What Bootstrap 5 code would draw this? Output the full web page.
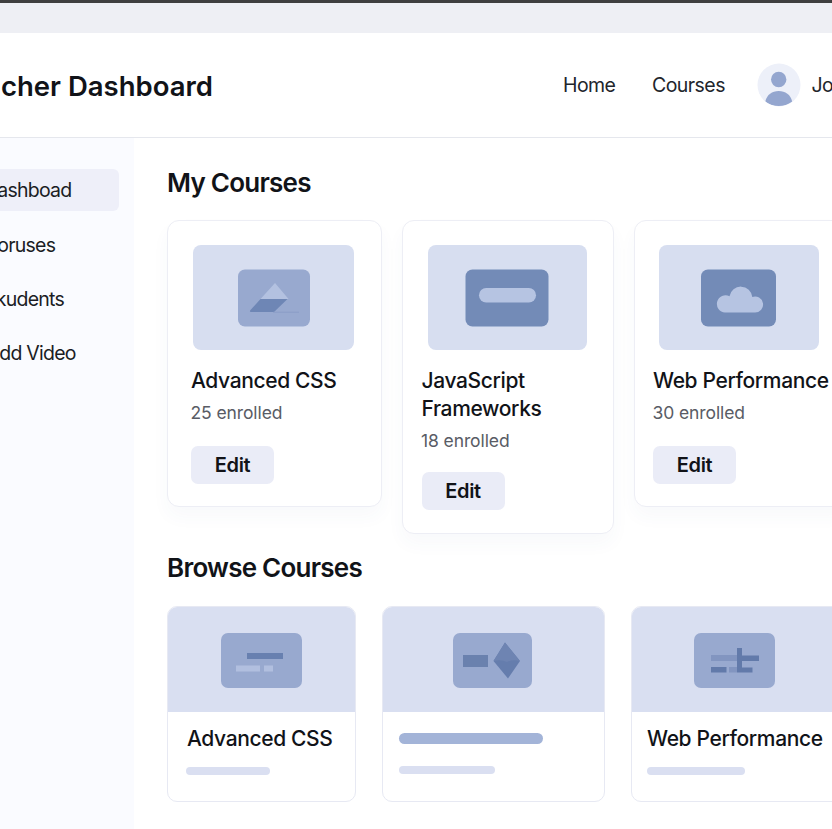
<!DOCTYPE html>
<html lang="en">
<head>
<meta charset="utf-8">
<meta name="viewport" content="width=device-width, initial-scale=1">
<title>Teacher Dashboard</title>
<link href="https://cdn.jsdelivr.net/npm/bootstrap@5.3.0/dist/css/bootstrap.min.css" rel="stylesheet">
<style>
body{font-family:Inter,"Liberation Sans",sans-serif;color:#111318;background:#fff;height:829px;overflow:hidden;font-size:20px}
.topline{height:3px;background:#3f3f3f}
.topband{height:30px;background:#eeeff4}
.app-header{height:105px;border-bottom:1px solid #e5e7ed}
.app-title{flex:0 0 563px;font-size:27.5px;font-weight:600;letter-spacing:0;line-height:34px;padding-left:1px;padding-top:1px;white-space:nowrap}
.top-link{font-size:19.5px;line-height:28px;letter-spacing:-.55px;color:#22252b;white-space:nowrap}
.link-home{flex:0 0 89px}
.link-courses{flex:0 0 104.5px}
.avatar{margin-right:11px}
.side{width:134px;height:691px;background:#fafbff;padding-top:31px}
.side-item{height:42px;line-height:42px;font-size:19.5px;letter-spacing:-.75px;color:#1b1d24;white-space:nowrap;margin-bottom:12px;overflow:hidden}
.side-item.current{width:119px;background:#eeeff9;border-radius:0 6px 6px 0;margin-bottom:13px}
.side-item span{display:inline-block;margin-left:-2.8px}
.side-item .cut-more{margin-left:-4.3px}
.side-item .cut-less{margin-left:-.8px}
.main-area{width:698px;padding:29px 0 0 33px}
.sec-title{font-size:26px;font-weight:600;line-height:32px;letter-spacing:-.75px;margin:0;white-space:nowrap}
.sec-browse{margin-top:17px}
.row-one{margin-top:20.500px;height:315.500px}
.row-two{margin-top:22px}
.course{border:1.5px solid #edeef5;border-radius:12px;box-shadow:0 10px 18px rgba(70,80,150,.035);background:#fff}
.course svg,.browse svg{display:block}
.thumb{margin-left:6px}
.c1 .thumb{margin-left:2px}
.course-name{font-size:21px;font-weight:500;line-height:28px;letter-spacing:-.37px;margin:0;white-space:nowrap}
.course .course-name{margin-top:17px}
.enrolled{font-size:17.5px;line-height:24px;color:#595c65;letter-spacing:-.1px;white-space:nowrap;margin-top:6px}
.course .enrolled{margin-left:-.5px}
.edit{width:83px;height:38px;margin-top:21px;background:#eaecf7;border:0;border-radius:7px;font-size:20px;font-weight:600;letter-spacing:-.4px;color:#111318;padding:0;line-height:38px}
.c2 .edit{margin-top:19.5px}
.c1{width:215px;height:287.500px;padding:24px 0 0 23px}
.c2{width:212px;height:314.500px;margin-left:19.500px;padding:24px 0 0 19px}
.c3{width:215px;height:287.500px;margin-left:20.5px;padding:24px 0 0 18px}
.browse{height:196px;border:1.5px solid #e7e9f3;border-radius:10px;background:#fff;overflow:hidden}
.cover{height:105px;background:#d9dff1}
.b1{width:189px}
.b2{width:223.5px;margin-left:25.5px}
.b3{width:224px;margin-left:26px}
.browse .course-name{margin:13px 0 0 15px}
.b1 .course-name{margin-left:19px}
.bar-soft{height:8px;width:98px;margin:14px 0 0 15px;border-radius:4px;background:#dadff1}
.b1 .bar-soft{width:84px;margin-left:18px}
.b2 .bar-soft{width:96px;margin:21.5px 0 0 16px}
.bar-strong{height:11.5px;width:144px;margin:20.5px 0 0 16px;border-radius:6px;background:#a3b4d8}
</style>
<script src="https://cdn.jsdelivr.net/npm/bootstrap@5.3.0/dist/js/bootstrap.bundle.min.js"></script>
</head>
<body>
<div class="topline"></div><div class="topband"></div>
<header class="app-header d-flex align-items-center overflow-hidden">
  <h1 class="app-title mb-0">cher Dashboard</h1>
  <nav class="d-flex align-items-center flex-shrink-0">
    <a class="top-link link-home text-decoration-none" href="#">Home</a>
    <a class="top-link link-courses text-decoration-none" href="#">Courses</a>
    <svg class="avatar flex-shrink-0" width="44" height="44" viewBox="0 0 44 44"><defs><clipPath id="av"><circle cx="22" cy="22" r="21.5"/></clipPath></defs><circle cx="22" cy="22" r="21.5" fill="#edf0f9"/><g clip-path="url(#av)" fill="#94a6cf"><circle cx="21.7" cy="16.5" r="7.7"/><path d="M8.3 38.5C10 31.500 15 28 21.700 28S33.500 31.500 35.200 38.500Q29 43 21.700 43T8.300 38.500Z"/></g></svg>
    <a class="top-link text-decoration-none" href="#">Jo</a>
  </nav>
</header>
<div class="d-flex">
  <aside class="side flex-shrink-0">
    <div class="side-item current"><span>ashboad</span></div>
    <div class="side-item"><span>oruses</span></div>
    <div class="side-item"><span class="cut-more">kudents</span></div>
    <div class="side-item"><span class="cut-less">dd Video</span></div>
  </aside>
  <main class="main-area flex-shrink-0">
    <h2 class="sec-title">My Courses</h2>
    <div class="row-one d-flex align-items-start">
      <article class="course c1 flex-shrink-0">
        <svg class="thumb" width="161" height="105"><rect width="161" height="105" rx="8" fill="#d7def0"/><rect x="45" y="24.500" width="72" height="57" rx="7" fill="#98a9cf"/><path d="M82 38L95.500 54H67.500Z" fill="#b3c1e0"/><path d="M67.500 54H94.500L81 67H58Q56 67 57.500 65Z" fill="#6e86b5"/><path d="M80 67.200H106" stroke="#8699c3" stroke-width=".7"/></svg>
        <h3 class="course-name">Advanced CSS</h3>
        <div class="enrolled">25 enrolled</div>
        <button class="btn edit">Edit</button>
      </article>
      <article class="course c2 flex-shrink-0">
        <svg class="thumb" width="159" height="105"><rect width="159" height="105" rx="8" fill="#d7def0"/><rect x="37.500" y="24.500" width="83" height="57" rx="7" fill="#738bb7"/><rect x="51" y="43" width="57" height="14.500" rx="7.200" fill="#b6c4e2"/></svg>
        <h3 class="course-name">JavaScript<br>Frameworks</h3>
        <div class="enrolled">18 enrolled</div>
        <button class="btn edit">Edit</button>
      </article>
      <article class="course c3 flex-shrink-0">
        <svg class="thumb" width="160" height="105"><rect width="160" height="105" rx="8" fill="#d7def0"/><rect x="42" y="24.500" width="75" height="57" rx="7" fill="#738bb7"/><path d="M66 67.500a8.600 8.600 0 1 1 4.500-16.200a11.500 11.500 0 0 1 22.800 0.700a8 8 0 1 1 2.700 15.500Z" fill="#b6c4e2"/></svg>
        <h3 class="course-name">Web Performance</h3>
        <div class="enrolled">30 enrolled</div>
        <button class="btn edit">Edit</button>
      </article>
    </div>
    <h2 class="sec-title sec-browse">Browse Courses</h2>
    <div class="row-two d-flex">
      <article class="browse b1 flex-shrink-0">
        <div class="cover"><svg width="187" height="105"><rect x="53" y="26" width="81" height="55" rx="7" fill="#98a9cf"/><rect x="79" y="46" width="36" height="6" fill="#6880b0"/><rect x="68" y="58.500" width="24" height="6" fill="#b1bfdf"/><rect x="96" y="58.500" width="9" height="6" fill="#b1bfdf"/></svg></div>
        <h3 class="course-name">Advanced CSS</h3>
        <div class="bar-soft"></div>
      </article>
      <article class="browse b2 flex-shrink-0">
        <div class="cover"><svg width="222" height="105"><rect x="70" y="26" width="79" height="55" rx="7" fill="#98a9cf"/><rect x="80" y="48" width="25" height="12" fill="#6a81ae"/><path d="M122 35.500L137 54L125 71.500L110.500 54Z" fill="#657dad"/><path d="M122 35.500L137 54Q130 52 124 55Q118 52 110.500 54Z" fill="#6e84b2"/></svg></div>
        <div class="bar-strong"></div>
        <div class="bar-soft"></div>
      </article>
      <article class="browse b3 flex-shrink-0">
        <div class="cover"><svg width="222" height="105"><rect x="62" y="26" width="81" height="55" rx="7" fill="#98a9cf"/><rect x="79" y="48" width="26" height="6" fill="#8295c0"/><rect x="97" y="60" width="8" height="5.500" fill="#8295c0"/><path d="M79 60h15.500v5.500H79zM105 41h5v7.500h17V54h-17v6.500h10.500v5H105z" fill="#627aaa"/></svg></div>
        <h3 class="course-name">Web Performance</h3>
        <div class="bar-soft"></div>
      </article>
    </div>
  </main>
</div>
</body>
</html>
